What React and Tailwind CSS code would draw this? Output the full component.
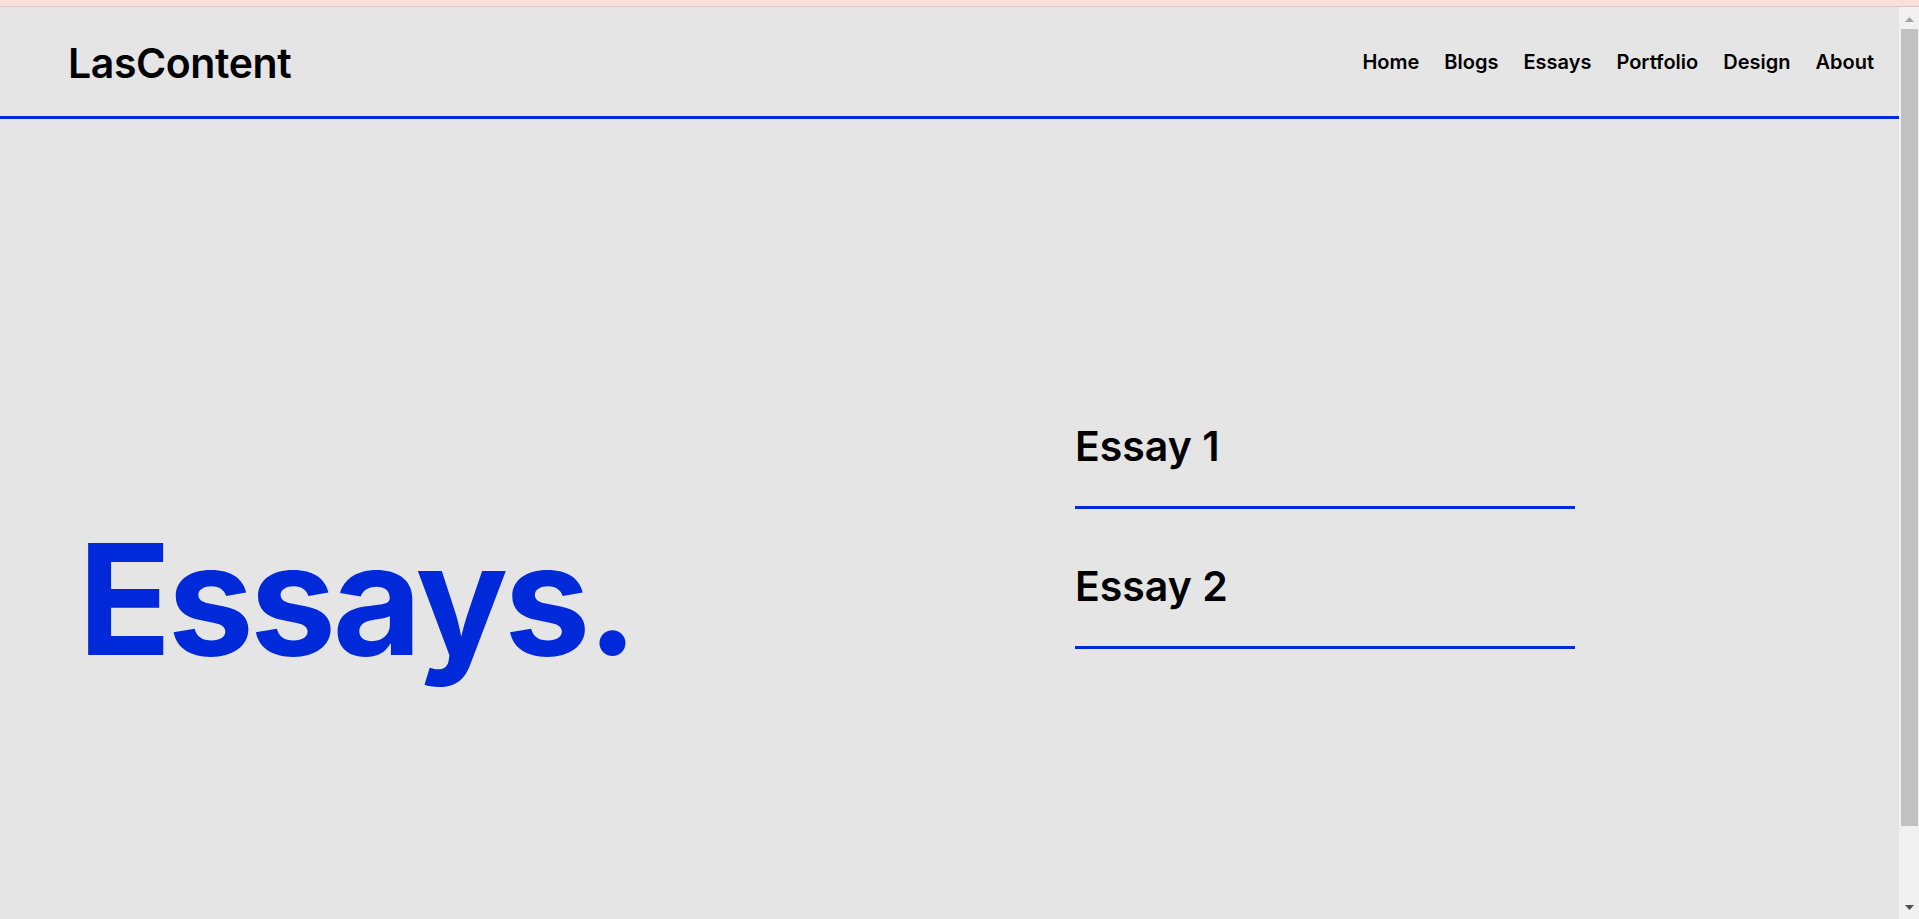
const navItems = ['Home', 'Blogs', 'Essays', 'Portfolio', 'Design', 'About']
const essays = ['Essay 1', 'Essay 2']

function Scrollbar() {
  // fake browser scrollbar, the reference page scrolls a little
  return (
    <div className="w-[20px] shrink-0 bg-[#f1f1f1] flex flex-col items-center">
      <svg width="9" height="5" viewBox="0 0 9 5" className="mt-[10px]">
        <path d="M4.5 0L9 5H0z" fill="#a3a3a3" />
      </svg>
      <div className="mt-[7px] ml-[2px] mr-[1px] self-stretch h-[797px] bg-[#c1c1c1]" />
      <div className="flex-1" />
      <svg width="9" height="5" viewBox="0 0 9 5" className="mb-[9px]">
        <path d="M0 0H9L4.5 5z" fill="#505050" />
      </svg>
    </div>
  )
}

export default function App() {
  return (
    <div className="h-[919px] overflow-hidden flex flex-col bg-[#e5e5e5] font-['Inter',sans-serif] text-black">
      <div className="h-[7px] shrink-0 bg-[#f8e1db] border-b border-[#dcc5bf]" />

      <div className="flex-1 flex min-h-0">
        <main className="flex-1 min-w-0">
          {/* header */}
          <header className="flex items-center justify-between h-[112px] pl-[68px] pr-[25px] border-b-[3px] border-[#0029d9]">
            <a href="#" className="mt-[3px] text-[41px] font-semibold tracking-[-0.01em] leading-none">LasContent</a>
            <nav className="flex items-center gap-[25px]">
              {navItems.map(item => (
                <a key={item} href="#" className="text-[20px] font-semibold leading-none">{item}</a>
              ))}
            </nav>
          </header>

          {/* hero */}
          <section className="flex items-start pl-[78px] pt-[307px]">
            <h1 className="w-[997px] pt-[96px] text-[154px] font-bold leading-none tracking-[-0.025em] text-[#0029d9]">
              Essays.
            </h1>
            <ul className="w-[500px] flex flex-col gap-[57px]">
              {essays.map(e => (
                <li key={e} className="flex flex-col gap-[39px]">
                  <span className="text-[41px] font-semibold leading-none">{e}</span>
                  <span className="h-[3px] bg-[#0029d9]" />
                </li>
              ))}
            </ul>
          </section>
        </main>

        <Scrollbar />
      </div>
    </div>
  )
}
